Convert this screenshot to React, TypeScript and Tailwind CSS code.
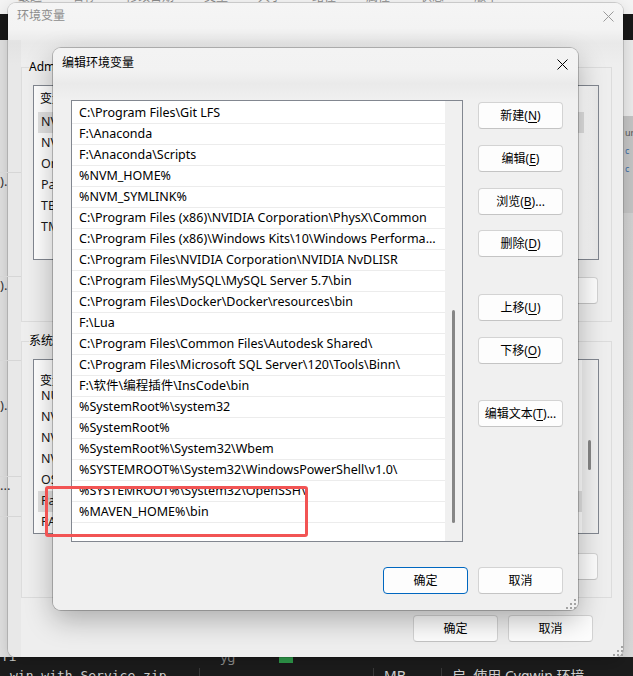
import React from "react";

const pathList = [
  "C:\\Program Files\\Git LFS",
  "F:\\Anaconda",
  "F:\\Anaconda\\Scripts",
  "%NVM_HOME%",
  "%NVM_SYMLINK%",
  "C:\\Program Files (x86)\\NVIDIA Corporation\\PhysX\\Common",
  "C:\\Program Files (x86)\\Windows Kits\\10\\Windows Performance Toolkit\\",
  "C:\\Program Files\\NVIDIA Corporation\\NVIDIA NvDLISR",
  "C:\\Program Files\\MySQL\\MySQL Server 5.7\\bin",
  "C:\\Program Files\\Docker\\Docker\\resources\\bin",
  "F:\\Lua",
  "C:\\Program Files\\Common Files\\Autodesk Shared\\",
  "C:\\Program Files\\Microsoft SQL Server\\120\\Tools\\Binn\\",
  "F:\\软件\\编程插件\\InsCode\\bin",
  "%SystemRoot%\\system32",
  "%SystemRoot%",
  "%SystemRoot%\\System32\\Wbem",
  "%SYSTEMROOT%\\System32\\WindowsPowerShell\\v1.0\\",
  "%SYSTEMROOT%\\System32\\OpenSSH\\",
  "%MAVEN_HOME%\\bin",
  "",
];

const userVars = ["NVM_HOME", "NVM_SYMLINK", "OneDrive", "Path", "TEMP", "TMP"];
const sysVars = [
  "NUMBER_OF_PROCESSORS",
  "NVCUDASAMPLES_ROOT",
  "NVM_HOME",
  "NVM_SYMLINK",
  "OS",
  "Path",
  "PATHEXT",
];

// text with one underlined access key, e.g. 新建(N)
const Label = ({ pre, k, post = ")" }: { pre: string; k: string; post?: string }) => (
  <span>
    {pre}(<span className="underline underline-offset-[2px]">{k}</span>
    {post}
  </span>
);

const WinButton = ({
  children,
  primary = false,
  className = "",
}: {
  children: React.ReactNode;
  primary?: boolean;
  className?: string;
}) => (
  <button
    className={`flex h-[27px] w-[85px] shrink-0 items-center justify-center rounded-[4px] border bg-[#fdfdfd] text-[12px] leading-4 text-black ${
      primary ? "border-[#0067c0]" : "border-[#d3d3d3] border-b-[#c4c4c4]"
    } ${className}`}
  >
    {children}
  </button>
);

const CloseIcon = ({ color }: { color: string }) => (
  <svg width="11" height="11" viewBox="0 0 11 11">
    <path d="M0.5 0.5 L10.5 10.5 M10.5 0.5 L0.5 10.5" stroke={color} strokeWidth="1" />
  </svg>
);

const Grip = () => (
  <svg width="10" height="10" viewBox="0 0 10 10" fill="#a3a3a3">
    <rect x="8" y="0" width="2" height="2" />
    <rect x="4" y="4" width="2" height="2" />
    <rect x="8" y="4" width="2" height="2" />
    <rect x="0" y="8" width="2" height="2" />
    <rect x="4" y="8" width="2" height="2" />
    <rect x="8" y="8" width="2" height="2" />
  </svg>
);

const VarList = ({
  rows,
  selected,
  headerPad,
  scroll = false,
}: {
  rows: string[];
  selected: number;
  headerPad: string;
  scroll?: boolean;
}) => (
  <div className="mt-[10px] mr-[12px] ml-[11px] flex h-[175px] overflow-hidden border border-[#828790] bg-white">
    <div className="flex-1">
      <div className={`flex h-[26px] text-[12px] leading-4 text-black ${headerPad}`}>
        <span className="w-[160px] pl-[6px]">变量</span>
        <span className="pl-[6px]">值</span>
      </div>
      {rows.map((r, i) => (
        <div
          key={r}
          className={`ml-[4px] flex h-[21px] items-center pl-[3px] text-[12.5px] text-[#1a1a1a] ${
            i === selected ? "bg-[#e1e1e1]" : ""
          }`}
        >
          {r}
        </div>
      ))}
    </div>
    {scroll ? (
      <div className="flex w-[16px] flex-col bg-[#f0f0f0] pt-[80px] pl-[6px]">
        <div className="h-[30px] w-[3px] rounded-full bg-[#868686]" />
      </div>
    ) : (
      <div className="w-[14px] bg-[linear-gradient(90deg,#ffffff,#e9e9e9)]" />
    )}
  </div>
);

export default function App() {
  return (
    <div className="relative h-[676px] w-[633px] overflow-hidden bg-[#e6e6e6] font-['Noto_Sans','Noto_Sans_CJK_SC',sans-serif]">
      {/* desktop behind the windows */}
      <div className="absolute inset-x-0 top-0 flex h-[40px] flex-col bg-[#f4f4f4]">
        <div className="h-[14px] overflow-hidden">
          <div className="-mt-[11px] flex gap-[30px] pl-[18px] text-[12px] leading-4 whitespace-nowrap text-[#8a8a8a]">
            <span>最近</span>
            <span>名称</span>
            <span>修改日期</span>
            <span>类型</span>
            <span>大小</span>
            <span>路径</span>
            <span>属性</span>
            <span>状态</span>
            <span>版本</span>
          </div>
        </div>
        <div className="flex-1 bg-[#181818]" />
      </div>
      <div className="absolute top-[40px] left-0 h-[617px] w-[8px] bg-[#e9e9e9]" />
      <div className="absolute top-[40px] right-0 flex h-[617px] w-[10px] flex-col">
        <div className="h-[76px] bg-[#ededed]" />
        <div className="flex h-[97px] flex-col gap-[8px] overflow-hidden bg-[#c5c5c5] pt-[12px] pl-[2px] text-[9px] leading-[10px] text-[#3b6ea8]">
          <span className="text-[#555]">ure</span>
          <span>c</span>
          <span>c</span>
        </div>
        <div className="flex-1 bg-[linear-gradient(180deg,#d2d2d2,#dcdcdc)]" />
      </div>
      <div className="absolute inset-x-0 bottom-0 flex h-[19px] flex-col overflow-hidden bg-[#1c1c1c]">
        <div className="flex h-[8px] shrink-0 items-end overflow-hidden text-[13px] leading-4 text-[#8f8f8f]">
          <span className="pl-[1px] font-['DejaVu_Sans_Mono',monospace] text-[#cfcfcf]">fi</span>
          <span className="ml-[204px]">yg</span>
          <span className="mb-[2px] ml-[44px] h-[6px] w-[14px] self-start bg-[#2f9a4b]" />
        </div>
        <div className="flex h-[11px] shrink-0 items-start pt-[3px]">
          <span className="w-[200px] border-r border-[#3a3a3a] pl-[10px] font-['DejaVu_Sans_Mono',monospace] text-[13px] leading-[16px] text-[#cfcfcf]">
            win-with-Service.zip
          </span>
          <span className="h-[16px] w-[174px] border-r border-[#3a3a3a]" />
          <span className="w-[68px] border-r border-[#3a3a3a] pl-[10px] text-[14px] leading-[16px] text-[#d4d4d4]">
            MB
          </span>
          <span className="pl-[10px] text-[14px] leading-[16px] whitespace-nowrap text-[#d4d4d4]">
            启&nbsp;&nbsp;使用 Cygwin 环境
          </span>
        </div>
      </div>

      {/* outer window: 环境变量 */}
      <div className="absolute top-[3px] left-[8px] flex h-[654px] w-[615px] flex-col rounded-[8px] bg-[linear-gradient(180deg,#f5f5f5_0px,#f3f3f3_26px,#e9e9e9_40px,#eeeeee_62px)] shadow-[0_0_0_1px_rgba(0,0,0,0.14),0_6px_18px_rgba(0,0,0,0.18)]">
        <div className="flex h-[56px] justify-between">
          <span className="pt-[5px] pl-[9px] text-[12px] leading-4 text-[#8c8c8c]">环境变量</span>
          <div className="pt-[8px] pr-[9px]">
            <CloseIcon color="#9a9a9a" />
          </div>
        </div>

        <fieldset className="mr-[11px] ml-[13px] border border-[#dcdcdc] pb-[17px]">
          <legend className="ml-[7px] text-[12px] leading-4 text-black">Administrator 的用户变量(U)</legend>
          <VarList rows={userVars} selected={0} headerPad="items-center" />
          <div className="mt-[17px] mr-[13px] flex justify-end gap-[10px]">
            <WinButton><Label pre="新建" k="N" post=")..." /></WinButton>
            <WinButton><Label pre="编辑" k="E" post=")..." /></WinButton>
            <WinButton><Label pre="删除" k="D" /></WinButton>
          </div>
        </fieldset>

        <fieldset className="mt-[11px] mr-[11px] ml-[13px] border border-[#dcdcdc] pb-[17px]">
          <legend className="ml-[7px] text-[12px] leading-4 text-black">系统变量(S)</legend>
          <VarList rows={sysVars} selected={5} headerPad="pt-[13px]" scroll />
          <div className="mt-[19px] mr-[13px] flex justify-end gap-[10px]">
            <WinButton><Label pre="新建" k="W" post=")..." /></WinButton>
            <WinButton><Label pre="编辑" k="I" post=")..." /></WinButton>
            <WinButton><Label pre="删除" k="L" /></WinButton>
          </div>
        </fieldset>

        <div className="mt-[17px] flex justify-end gap-[10px] pr-[30px]">
          <WinButton>确定</WinButton>
          <WinButton>取消</WinButton>
        </div>
        <div className="mt-auto flex justify-end pb-[1px]">
          <Grip />
        </div>
      </div>

      {/* see-through left rim of the outer window */}
      <div className="absolute top-[40px] left-0 flex h-[617px] w-[21px] flex-col bg-[rgba(0,0,0,0.025)] text-[13px] leading-4 text-[#333]">
        <div className="h-[133px] border-b border-[#d6d6d6]" />
        <div className="h-[68px]">).</div>
        <div className="h-[36px] border-b border-[#d6d6d6]" />
        <div className="h-[84px] border-b border-[#d6d6d6]">).</div>
        <div className="h-[36px]" />
        <div className="h-[80px] border-b border-[#d6d6d6]">).</div>
        <div className="h-[40px] border-b border-[#d6d6d6]">...</div>
      </div>

      {/* inner dialog: 编辑环境变量 */}
      <div className="absolute top-[48px] left-[53px] flex h-[562px] w-[525px] flex-col rounded-[8px] bg-[linear-gradient(180deg,#f3f3f3_0px,#f2f2f2_22px,#eaeaea_36px,#f0f0f0_52px)] shadow-[0_0_0_1px_rgba(0,0,0,0.22),0_10px_28px_rgba(0,0,0,0.28)]">
        <div className="flex h-[52px] justify-between">
          <span className="pt-[7px] pl-[9px] text-[12px] leading-4 text-black">编辑环境变量</span>
          <div className="pt-[11px] pr-[10px]">
            <CloseIcon color="#000" />
          </div>
        </div>

        <div className="flex pl-[18px]">
          <div className="flex h-[442px] w-[392px] overflow-hidden border border-[#828790] bg-white">
            <div className="min-w-0 flex-1 pt-[2px]">
              {pathList.map((p, i) => (
                <div
                  key={i}
                  className="h-[21px] truncate border-b border-[#ececec] pr-[3px] pl-[7px] text-[12.5px] leading-[20px] text-black"
                >
                  {p}
                </div>
              ))}
            </div>
            <div className="flex w-[17px] flex-col bg-[#f0f0f0] pt-[209px] pl-[7px]">
              <div className="h-[213px] w-[3px] rounded-full bg-[#868686]" />
            </div>
          </div>

          <div className="ml-[15px] flex w-[85px] flex-col">
            <WinButton className="mt-[2px]"><Label pre="新建" k="N" /></WinButton>
            <WinButton className="mt-[16px]"><Label pre="编辑" k="E" /></WinButton>
            <WinButton className="mt-[16px]"><Label pre="浏览" k="B" post=")..." /></WinButton>
            <WinButton className="mt-[15px]"><Label pre="删除" k="D" /></WinButton>
            <WinButton className="mt-[37px]"><Label pre="上移" k="U" /></WinButton>
            <WinButton className="mt-[16px]"><Label pre="下移" k="O" /></WinButton>
            <WinButton className="mt-[36px]"><Label pre="编辑文本" k="T" post=")..." /></WinButton>
          </div>
        </div>

        <div className="mt-[25px] flex justify-end gap-[10px] pr-[15px]">
          <WinButton primary>确定</WinButton>
          <WinButton>取消</WinButton>
        </div>
        <div className="mt-auto flex justify-end pr-[2px] pb-[1px]">
          <Grip />
        </div>
      </div>

      {/* red highlight drawn over the list */}
      <div className="absolute top-[486px] left-[45px] h-[51px] w-[263px] rounded-[3px] border-[3px] border-[#f25454]" />
    </div>
  );
}
